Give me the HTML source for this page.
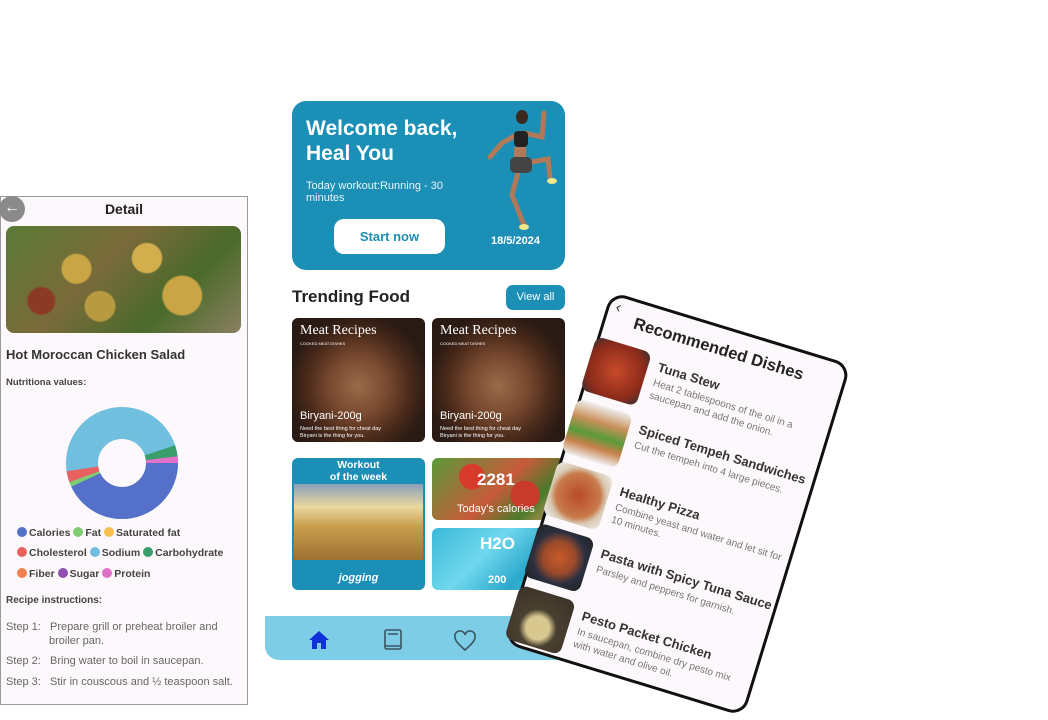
<!DOCTYPE html>
<html><head><meta charset="utf-8"><style>
*{margin:0;padding:0;box-sizing:border-box}
body{width:1048px;height:720px;background:#fff;position:relative;overflow:hidden;font-family:"Liberation Sans",Arial,sans-serif}
.abs{position:absolute}
#left{left:0;top:196px;width:248px;height:509px;border:1px solid #9a9a9a;background:#fdf8fc;color:#333}
.leg{font-size:10.5px;font-weight:bold;color:#444;position:absolute;white-space:nowrap}
.dot{display:inline-block;width:10px;height:10px;border-radius:50%;vertical-align:-1px;margin-right:2px}
.step{position:absolute;left:5px;font-size:11px;color:#666;white-space:nowrap}
.meat{background:radial-gradient(ellipse at 50% 55%,#9a6a4a 0,#7a4a30 30%,#4a2a1a 55%,#2a1a14 75%),#2a1a14;border-radius:6px;overflow:hidden;color:#fff}
#rec{left:552px;top:320px;width:251px;height:368px;border:3px solid #111;border-radius:16px;background:#fdf8fc;transform:rotate(17deg)}
.it{position:absolute;left:-4px;width:260px;height:62px}
.it .im{position:absolute;left:0;top:0;width:58px;height:56px;border-radius:8px}
.it b{position:absolute;left:68px;top:4px;font-size:13px;color:#333;white-space:nowrap}
.it span{position:absolute;left:68px;top:22px;font-size:10px;color:#777;width:175px;line-height:13px}
</style></head><body>

<div id="left" class="abs">
  <div class="abs" style="left:-2px;top:-1px;width:26px;height:26px;border-radius:50%;background:#8a8a8a;color:#fff;font-size:16px;text-align:center;line-height:24px">←</div>
  <div class="abs" style="left:0;width:246px;top:4px;text-align:center;font-weight:bold;font-size:14px;color:#222">Detail</div>
  <div class="abs" style="left:5px;top:29px;width:235px;height:107px;border-radius:8px;background:radial-gradient(circle at 30% 40%,#c9a545 0 8%,transparent 9%),radial-gradient(circle at 60% 30%,#d2ae4c 0 9%,transparent 10%),radial-gradient(circle at 75% 65%,#c9a545 0 10%,transparent 11%),radial-gradient(circle at 40% 75%,#b89a40 0 9%,transparent 10%),radial-gradient(circle at 15% 70%,#8a3a25 0 6%,transparent 7%),linear-gradient(135deg,#5a7a35,#7a6a3a 40%,#4a6a2a 70%,#8a8060)"></div>
  <div class="abs" style="left:5px;top:150px;font-size:13px;font-weight:bold;color:#333">Hot Moroccan Chicken Salad</div>
  <div class="abs" style="left:5px;top:180px;font-size:9.5px;font-weight:bold;color:#444">Nutritiona values:</div>
  <svg class="abs" style="left:66px;top:407px;position:fixed" width="112" height="112" viewBox="0 0 112 112">
    <g fill="none" stroke-width="32">
      <circle cx="56" cy="56" r="40" stroke="#70bfdf"/>
      <circle cx="56" cy="56" r="40" stroke="#5570c8" stroke-dasharray="108 400"/>
      <circle cx="56" cy="56" r="40" stroke="#80cc70" stroke-dasharray="0 108 3.5 400"/>
      <circle cx="56" cy="56" r="40" stroke="#e86060" stroke-dasharray="0 111.5 8 400"/>
      <circle cx="56" cy="56" r="40" stroke="#3a9e6a" stroke-dasharray="0 238 9 400"/>
      <circle cx="56" cy="56" r="40" stroke="#e070c8" stroke-dasharray="0 246 5.3 400"/>
    </g>
  </svg>
  <div class="leg" style="left:16px;top:330px"><i class="dot" style="background:#5570c8"></i>Calories <i class="dot" style="background:#80cc70"></i>Fat <i class="dot" style="background:#f5c050"></i>Saturated fat</div>
  <div class="leg" style="left:16px;top:350px"><i class="dot" style="background:#e86060"></i>Cholesterol <i class="dot" style="background:#70bfdf"></i>Sodium <i class="dot" style="background:#3a9e6a"></i>Carbohydrate</div>
  <div class="leg" style="left:16px;top:371px"><i class="dot" style="background:#f08050"></i>Fiber <i class="dot" style="background:#9050b0"></i>Sugar <i class="dot" style="background:#e070c8"></i>Protein</div>
  <div class="abs" style="left:5px;top:398px;font-size:10px;font-weight:bold;color:#444">Recipe instructions:</div>
  <div class="step" style="top:424px">Step 1: &nbsp;&nbsp;Prepare grill or preheat broiler and<br><span style="padding-left:43px;line-height:16px">broiler pan.</span></div>
  <div class="step" style="top:458px">Step 2: &nbsp;&nbsp;Bring water to boil in saucepan.</div>
  <div class="step" style="top:479px">Step 3: &nbsp;&nbsp;Stir in couscous and ½ teaspoon salt.</div>
</div>

<div class="abs" style="left:292px;top:101px;width:273px;height:169px;background:#1b8fb5;border-radius:14px;color:#fff">
  <div class="abs" style="left:14px;top:15px;font-size:21px;font-weight:bold;line-height:25px">Welcome back,<br>Heal You</div>
  <div class="abs" style="left:14px;top:79px;font-size:11px;line-height:12px;color:#e8f6fb">Today workout:Running - 30<br>minutes</div>
  <div class="abs" style="left:42px;top:118px;width:111px;height:35px;background:#fff;border-radius:10px;color:#1b8fb5;font-weight:bold;font-size:13px;text-align:center;line-height:35px">Start now</div>
  <div class="abs" style="left:199px;top:134px;font-size:11px;font-weight:bold">18/5/2024</div>
  <svg class="abs" style="left:190px;top:4px" width="80" height="128" viewBox="0 0 80 128">
    <g stroke="#b07a5a" stroke-width="5" stroke-linecap="round" fill="none">
      <path d="M38 28 L20 38 L8 52"/><path d="M42 28 L60 32 L62 8"/>
      <path d="M38 60 L30 90 L42 120"/><path d="M44 58 L66 54 L68 72"/>
    </g>
    <ellipse cx="40" cy="12" rx="6" ry="7" fill="#3a2a20"/>
    <rect x="32" y="26" width="14" height="16" rx="4" fill="#222"/>
    <rect x="32" y="42" width="12" height="12" fill="#b07a5a"/>
    <rect x="28" y="52" width="22" height="16" rx="5" fill="#444"/>
    <ellipse cx="42" cy="122" rx="5" ry="3" fill="#eee88a"/><ellipse cx="70" cy="76" rx="5" ry="3" fill="#eee88a"/>
  </svg>
</div>
<div class="abs" style="left:292px;top:287px;font-size:17px;font-weight:bold;color:#222">Trending Food</div>
<div class="abs" style="left:506px;top:285px;width:59px;height:25px;background:#1b8fb5;border-radius:7px;color:#fff;font-size:11px;text-align:center;line-height:25px">View all</div>

<div class="abs meat" style="left:292px;top:318px;width:133px;height:124px">
  <div class="abs" style="left:8px;top:5px;font-family:'Liberation Serif',serif;font-size:14px">Meat Recipes</div>
  <div class="abs" style="left:8px;top:23px;font-size:4px">COOKED MEAT DISHES</div>
  <div class="abs" style="left:8px;top:92px;font-size:11px">Biryani-200g</div>
  <div class="abs" style="left:8px;top:108px;font-size:5.5px;line-height:7px">Need the best thing for cheat day<br>Biryani is the thing for you.</div>
</div>
<div class="abs meat" style="left:432px;top:318px;width:133px;height:124px">
  <div class="abs" style="left:8px;top:5px;font-family:'Liberation Serif',serif;font-size:14px">Meat Recipes</div>
  <div class="abs" style="left:8px;top:23px;font-size:4px">COOKED MEAT DISHES</div>
  <div class="abs" style="left:8px;top:92px;font-size:11px">Biryani-200g</div>
  <div class="abs" style="left:8px;top:108px;font-size:5.5px;line-height:7px">Need the best thing for cheat day<br>Biryani is the thing for you.</div>
</div>

<div class="abs" style="left:292px;top:458px;width:133px;height:132px;background:#1b8fb5;border-radius:6px;color:#fff;overflow:hidden">
  <div class="abs" style="left:0;width:133px;top:1px;text-align:center;font-size:10.5px;font-weight:bold;line-height:12px">Workout<br>of the week</div>
  <div class="abs" style="left:2px;top:26px;width:129px;height:76px;background:linear-gradient(180deg,#8aa0b8 0,#e8d8a0 30%,#c8a050 55%,#a07030 100%)"></div>
  <div class="abs" style="left:0;width:133px;top:114px;text-align:center;font-size:11px;font-weight:bold;font-style:italic">jogging</div>
</div>
<div class="abs" style="left:432px;top:458px;width:133px;height:62px;border-radius:6px;background:radial-gradient(circle at 30% 30%,#d63a2a 0 12%,transparent 13%),radial-gradient(circle at 70% 60%,#c83a2a 0 14%,transparent 15%),linear-gradient(135deg,#5a9a3a,#c85a3a 50%,#4a7a2a 75%,#e89a6a);color:#fff">
  <div class="abs" style="left:45px;top:12px;font-size:17px;font-weight:bold">2281</div>
  <div class="abs" style="left:25px;top:45px;font-size:11px">Today's calories</div>
</div>
<div class="abs" style="left:432px;top:528px;width:133px;height:62px;border-radius:6px;background:linear-gradient(135deg,#3ab8d8,#70d8ee 40%,#2aa8cc 70%,#58c8e4);color:#fff">
  <div class="abs" style="left:48px;top:6px;font-size:17px;font-weight:bold">H2O</div>
  <div class="abs" style="left:56px;top:46px;font-size:11px;font-weight:bold">200</div>
</div>

<div class="abs" style="left:265px;top:616px;width:300px;height:44px;background:#7dcde6;border-radius:0 0 0 14px"></div>
<svg class="abs" style="left:308px;top:630px" width="22" height="20" viewBox="0 0 22 20"><path d="M11 1 L1 10 H4 V19 H9 V13 H13 V19 H18 V10 H21 Z" fill="#1030d8"/></svg>
<svg class="abs" style="left:382px;top:628px" width="22" height="24" viewBox="0 0 22 24"><g fill="none" stroke="#3a5560" stroke-width="1.6"><rect x="3" y="2" width="16" height="19" rx="1.5"/><path d="M3 18 H19 M6 6 H16"/></g></svg>
<svg class="abs" style="left:453px;top:630px" width="24" height="22" viewBox="0 0 24 22"><path d="M12 20 C4 13 2 10 2 7 A5 5 0 0 1 12 5 A5 5 0 0 1 22 7 C22 10 20 13 12 20Z" fill="none" stroke="#3a5560" stroke-width="1.6"/></svg>

<div id="rec" class="abs">
  <div class="abs" style="left:6px;top:2px;font-size:16px;color:#333">‹</div>
  <div class="abs" style="left:28px;top:12px;font-size:16.5px;font-weight:bold;color:#222;white-space:nowrap">Recommended Dishes</div>
  <div class="it" style="top:44px"><div class="im" style="background:radial-gradient(circle,#c84a2a,#8a2a1a 70%,#333)"></div><b>Tuna Stew</b><span>Heat 2 tablespoons of the oil in a saucepan and add the onion.</span></div>
  <div class="it" style="top:109px"><div class="im" style="background:linear-gradient(180deg,#eee 0,#c8905a 30%,#5a9a3a 55%,#c8804a 75%,#eee)"></div><b>Spiced Tempeh Sandwiches</b><span>Cut the tempeh into 4 large pieces.</span></div>
  <div class="it" style="top:174px"><div class="im" style="background:radial-gradient(circle,#b84a2a 0,#c87a4a 55%,#d8c8b0 70%,#eee)"></div><b>Healthy Pizza</b><span>Combine yeast and water and let sit for 10 minutes.</span></div>
  <div class="it" style="top:239px"><div class="im" style="background:radial-gradient(circle,#c85a2a 0,#9a4a2a 40%,#2a3040 65%,#222)"></div><b>Pasta with Spicy Tuna Sauce</b><span>Parsley and peppers for garnish.</span></div>
  <div class="it" style="top:304px"><div class="im" style="background:radial-gradient(circle at 50% 65%,#d8c890 0 25%,#4a4030 40%,#3a3228)"></div><b>Pesto Packet Chicken</b><span>In saucepan, combine dry pesto mix with water and olive oil.</span></div>
</div>
</body></html>
